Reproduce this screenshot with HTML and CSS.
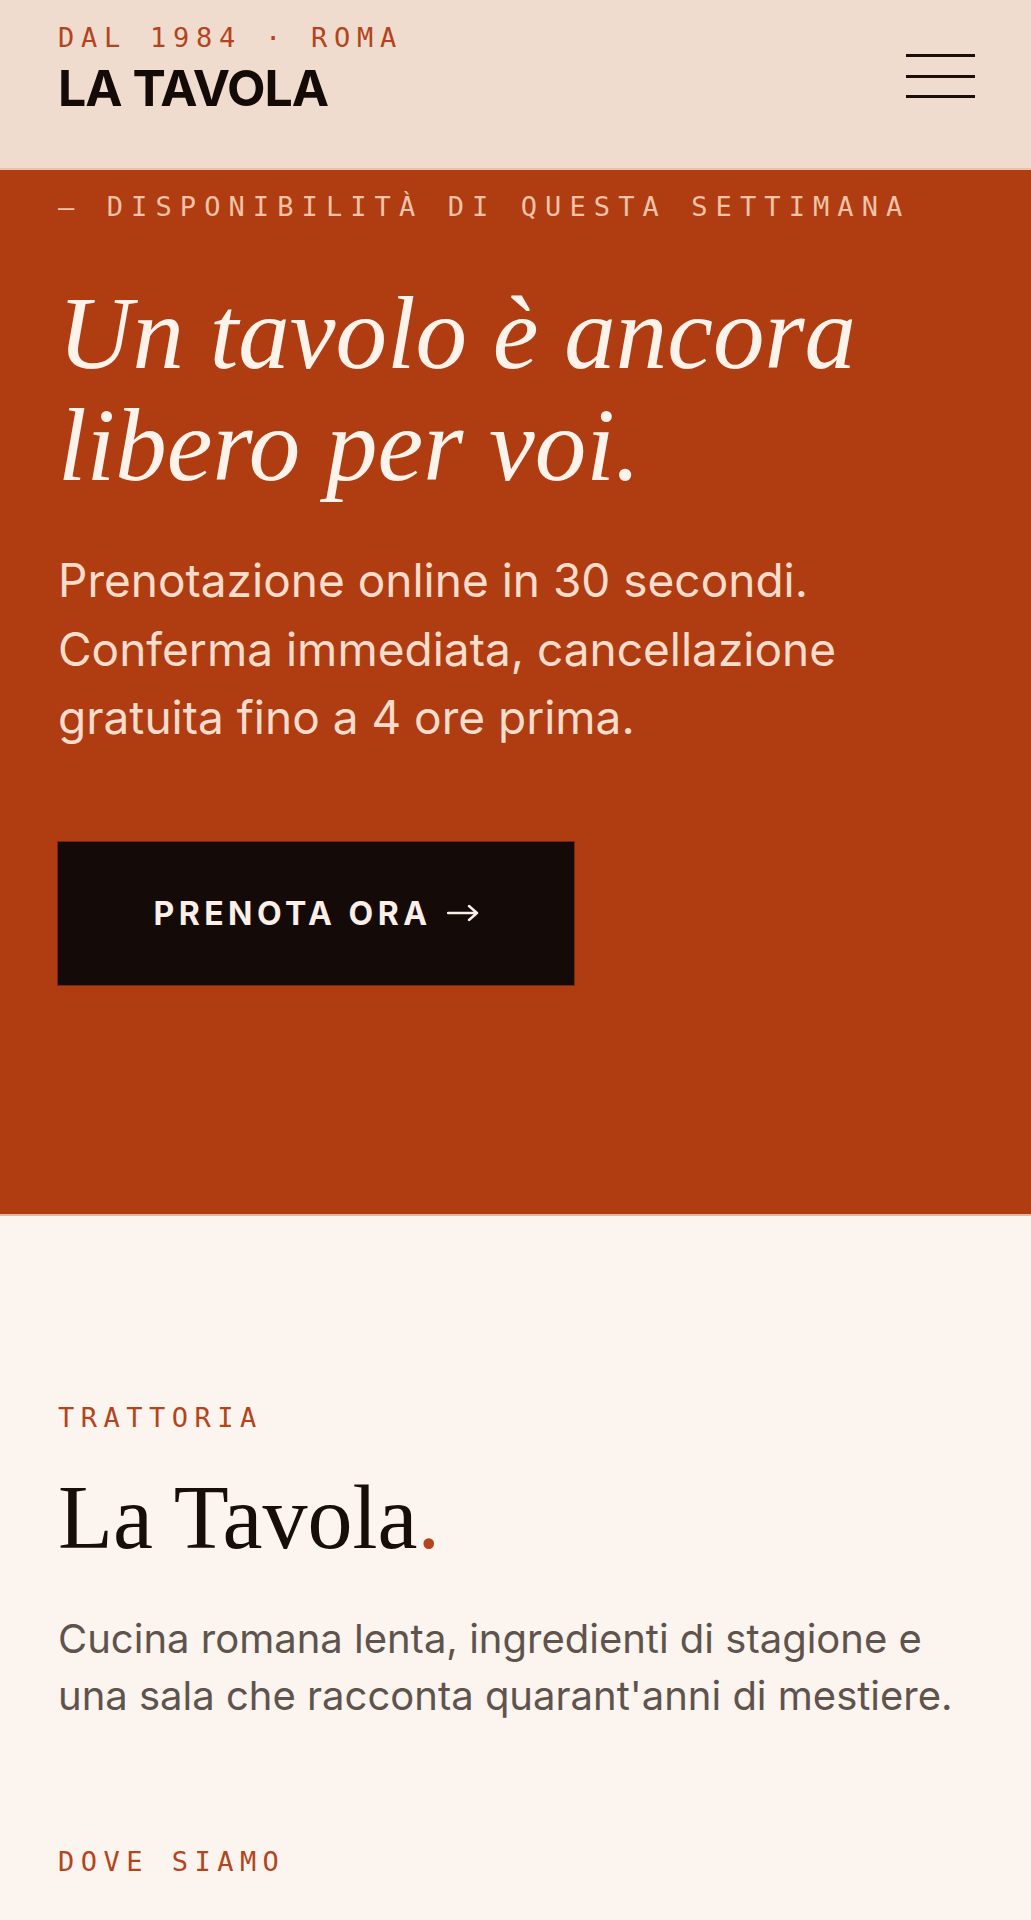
FILE: index.html
```html
<!DOCTYPE html>
<html lang="it">
<head>
<meta charset="utf-8">
<title>La Tavola — Trattoria Roma</title>
<link rel="stylesheet" href="styles.css">
</head>
<body>
<header class="site-header">
  <div class="brand">
    <div class="kicker">DAL 1984 · ROMA</div>
    <div class="brand-name">LA TAVOLA</div>
  </div>
  <button class="menu-btn" aria-label="Menu">
    <span></span><span></span><span></span>
  </button>
</header>

<section class="hero">
  <div class="hero-eyebrow">— DISPONIBILITÀ DI QUESTA SETTIMANA</div>
  <h1 class="hero-title">Un tavolo è ancora libero per voi.</h1>
  <p class="hero-text">Prenotazione online in 30 secondi. Conferma immediata, cancellazione gratuita fino a 4 ore prima.</p>
  <div class="hero-action">
    <a class="btn-book" href="#">PRENOTA ORA
      <svg class="arrow" viewBox="0 0 32 18" width="32" height="18" aria-hidden="true">
        <path d="M1 9 H30 M22 2 L30 9 L22 16" fill="none" stroke="currentColor" stroke-width="2.4" stroke-linecap="round" stroke-linejoin="round"/>
      </svg>
    </a>
  </div>
</section>

<section class="about">
  <div class="label">TRATTORIA</div>
  <h2 class="about-title">La Tavola<span class="dot">.</span></h2>
  <p class="about-text">Cucina romana lenta, ingredienti di stagione e una sala che racconta quarant'anni di mestiere.</p>
  <div class="label label-next">DOVE SIAMO</div>
</section>
</body>
</html>
```

FILE: styles.css
```css
* { box-sizing: border-box; }

html, body {
  margin: 0;
  padding: 0;
}

body {
  background: #FCF4EE;
  font-family: "Inter", "Noto Sans", sans-serif;
  color: #140A07;
}

/* Header */
.site-header {
  display: flex;
  justify-content: space-between;
  align-items: flex-start;
  height: 170px;
  padding: 22px 56px 0 58px;
  background: #F0DBCF;
  border-bottom: 2px solid #E9C1AC;
}

.kicker {
  font-family: "DejaVu Sans Mono", "Liberation Mono", monospace;
  font-size: 27px;
  line-height: 32px;
  letter-spacing: 0.25em;
  color: #B3441C;
}

.brand-name {
  margin-top: 9px;
  font-family: "Inter", sans-serif;
  font-weight: 700;
  font-size: 50px;
  line-height: 50px;
  letter-spacing: -0.02em;
  color: #140A07;
}

.menu-btn {
  margin-top: 32px;
  width: 69px;
  height: 44px;
  padding: 0;
  border: 0;
  background: transparent;
  display: flex;
  flex-direction: column;
  justify-content: space-between;
}

.menu-btn span {
  display: block;
  width: 100%;
  height: 3px;
  background: #1A0E0A;
}

/* Hero */
.hero {
  background: #B03C12;
  padding: 21px 58px 229px;
  border-bottom: 2px solid #E3B8A2;
}

.hero-eyebrow {
  font-family: "DejaVu Sans Mono", "Liberation Mono", monospace;
  font-size: 27px;
  line-height: 32px;
  letter-spacing: 0.3em;
  color: #F2C3A6;
  white-space: nowrap;
}

.hero-title {
  margin: 54px 0 0;
  font-family: "Liberation Serif", "DejaVu Serif", serif;
  font-style: italic;
  font-weight: 400;
  font-size: 103px;
  line-height: 112px;
  color: #FDF3EA;
}

.hero-text {
  margin: 45px 0 0;
  font-size: 46px;
  line-height: 68.5px;
  color: #F8DDCC;
}

.hero-action {
  margin-top: 90px;
}

.btn-book {
  display: flex;
  justify-content: center;
  align-items: center;
  gap: 15px;
  width: 516px;
  height: 143px;
  background: #140A07;
  color: #FBEFE7;
  font-family: "Inter", sans-serif;
  font-weight: 700;
  font-size: 32px;
  letter-spacing: 0.14em;
  text-decoration: none;
  box-shadow: 0 0 0 1px rgba(60, 20, 8, 0.5);
}

.btn-book .arrow {
  display: block;
  flex: none;
}

/* About */
.about {
  background: #FCF4EE;
  padding: 186px 58px 80px;
}

.label {
  font-family: "DejaVu Sans Mono", "Liberation Mono", monospace;
  font-size: 27px;
  line-height: 32px;
  letter-spacing: 0.24em;
  color: #B3441C;
}

.about-title {
  margin: 34px 0 0;
  font-family: "Liberation Serif", "DejaVu Serif", serif;
  font-weight: 400;
  font-size: 90px;
  line-height: 99px;
  color: #170D09;
}

.about-title .dot {
  color: #B3441C;
}

.about-text {
  margin: 43px 0 0;
  font-size: 40px;
  line-height: 57.5px;
  color: #5E534D;
}

.label-next {
  margin-top: 121px;
}
```
